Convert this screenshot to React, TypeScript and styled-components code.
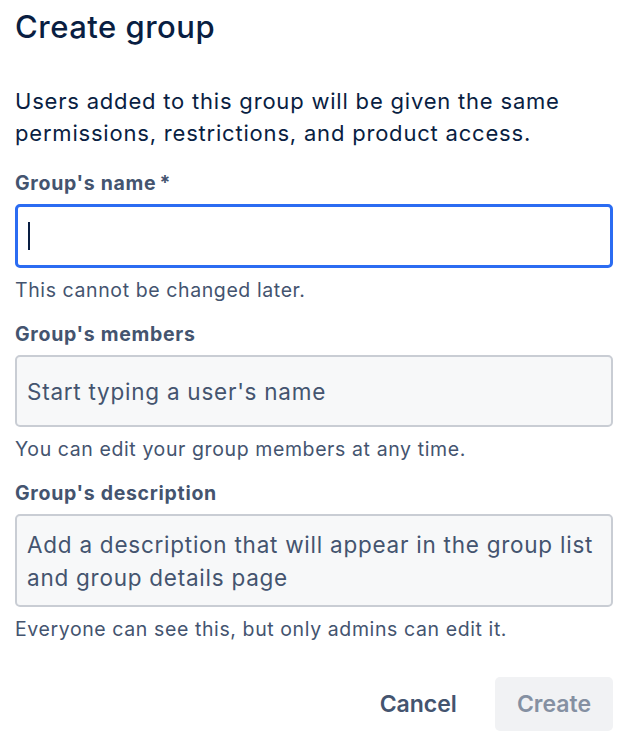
import { ReactElement } from 'react';
import styled, { createGlobalStyle } from 'styled-components';

/*********************************************************
*   STYLES
*********************************************************/
const GlobalStyle = createGlobalStyle`
    html, body {
        margin: 0;
        padding: 0;
        background: #ffffff;
    }

    body {
        font-family: Inter, "Noto Sans", "Liberation Sans", sans-serif;
        color: #172B4D;
        -webkit-font-smoothing: antialiased;
    }
`;

const Dialog = styled.div`
    width: 628px;
    box-sizing: border-box;
    padding: 9px 15px 0 15px;
    display: flex;
    flex-direction: column;
`;

const Title = styled.h1`
    margin: 0;
    font-size: 31px;
    line-height: 36px;
    font-weight: 500;
    color: #091E42;
    letter-spacing: 0.5px;
`;

const Intro = styled.p`
    margin: 40px 0 0 0;
    font-size: 22px;
    line-height: 32px;
    font-weight: 400;
    letter-spacing: 0.8px;
    color: #091E42;
`;

const Form = styled.div`
    margin-top: 24px;
    display: flex;
    flex-direction: column;
    gap: 24px;
`;

const FieldGroup = styled.div`
    display: flex;
    flex-direction: column;
`;

const Label = styled.label`
    font-size: 19.5px;
    line-height: 20px;
    font-weight: 700;
    letter-spacing: 0.7px;
    color: #44546F;
    margin-bottom: 11px;

    span {
        margin-left: 3px;
    }
`;

const Field = styled.div<{ $focused?: boolean; $height: number }>`
    box-sizing: border-box;
    height: ${(props) => props.$height}px;
    border-radius: 5px;
    border: ${(props) => props.$focused ? '3px solid #2B6CF2' : '2.5px solid #C9CDD4'};
    background: ${(props) => props.$focused ? '#ffffff' : '#F7F8F9'};
    padding: 0 10px;
    display: flex;
    align-items: center;
    font-size: 22.5px;
    line-height: 33px;
    letter-spacing: 0.75px;
    color: #44546F;
`;

const Caret = styled.span`
    display: block;
    width: 2px;
    height: 28px;
    background: #091E42;
`;

const Helper = styled.div`
    margin-top: 12px;
    font-size: 19.5px;
    line-height: 20px;
    letter-spacing: 0.6px;
    color: #44546F;
`;

const Footer = styled.div`
    margin-top: 38px;
    display: flex;
    justify-content: flex-end;
    gap: 16px;
`;

const Button = styled.button<{ $disabled?: boolean }>`
    height: 54px;
    min-width: 118px;
    padding: 0 22px;
    border: none;
    border-radius: 5px;
    font-family: inherit;
    font-size: 23px;
    font-weight: 600;
    background: ${(props) => props.$disabled ? '#F1F2F4' : 'transparent'};
    color: ${(props) => props.$disabled ? '#8590A2' : '#44546F'};
    cursor: ${(props) => props.$disabled ? 'not-allowed' : 'pointer'};
`;

/*********************************************************
*   COMPONENT
*********************************************************/
const App = (): ReactElement => {
    return (
        <>
            <GlobalStyle />
            <Dialog>
                <Title>Create group</Title>
                <Intro>
                    Users added to this group will be given the same permissions, restrictions, and product access.
                </Intro>
                <Form>
                    <FieldGroup>
                        <Label>Group's name<span>*</span></Label>
                        <Field $focused $height={64}>
                            <Caret />
                        </Field>
                        <Helper>This cannot be changed later.</Helper>
                    </FieldGroup>
                    <FieldGroup>
                        <Label>Group's members</Label>
                        <Field $height={72}>Start typing a user's name</Field>
                        <Helper>You can edit your group members at any time.</Helper>
                    </FieldGroup>
                    <FieldGroup>
                        <Label>Group's description</Label>
                        <Field $height={93}>
                            Add a description that will appear in the group list and group details page
                        </Field>
                        <Helper>Everyone can see this, but only admins can edit it.</Helper>
                    </FieldGroup>
                </Form>
                <Footer>
                    <Button>Cancel</Button>
                    <Button $disabled>Create</Button>
                </Footer>
            </Dialog>
        </>
    );
};

/*********************************************************
*   EXPORT
*********************************************************/
export default App;
